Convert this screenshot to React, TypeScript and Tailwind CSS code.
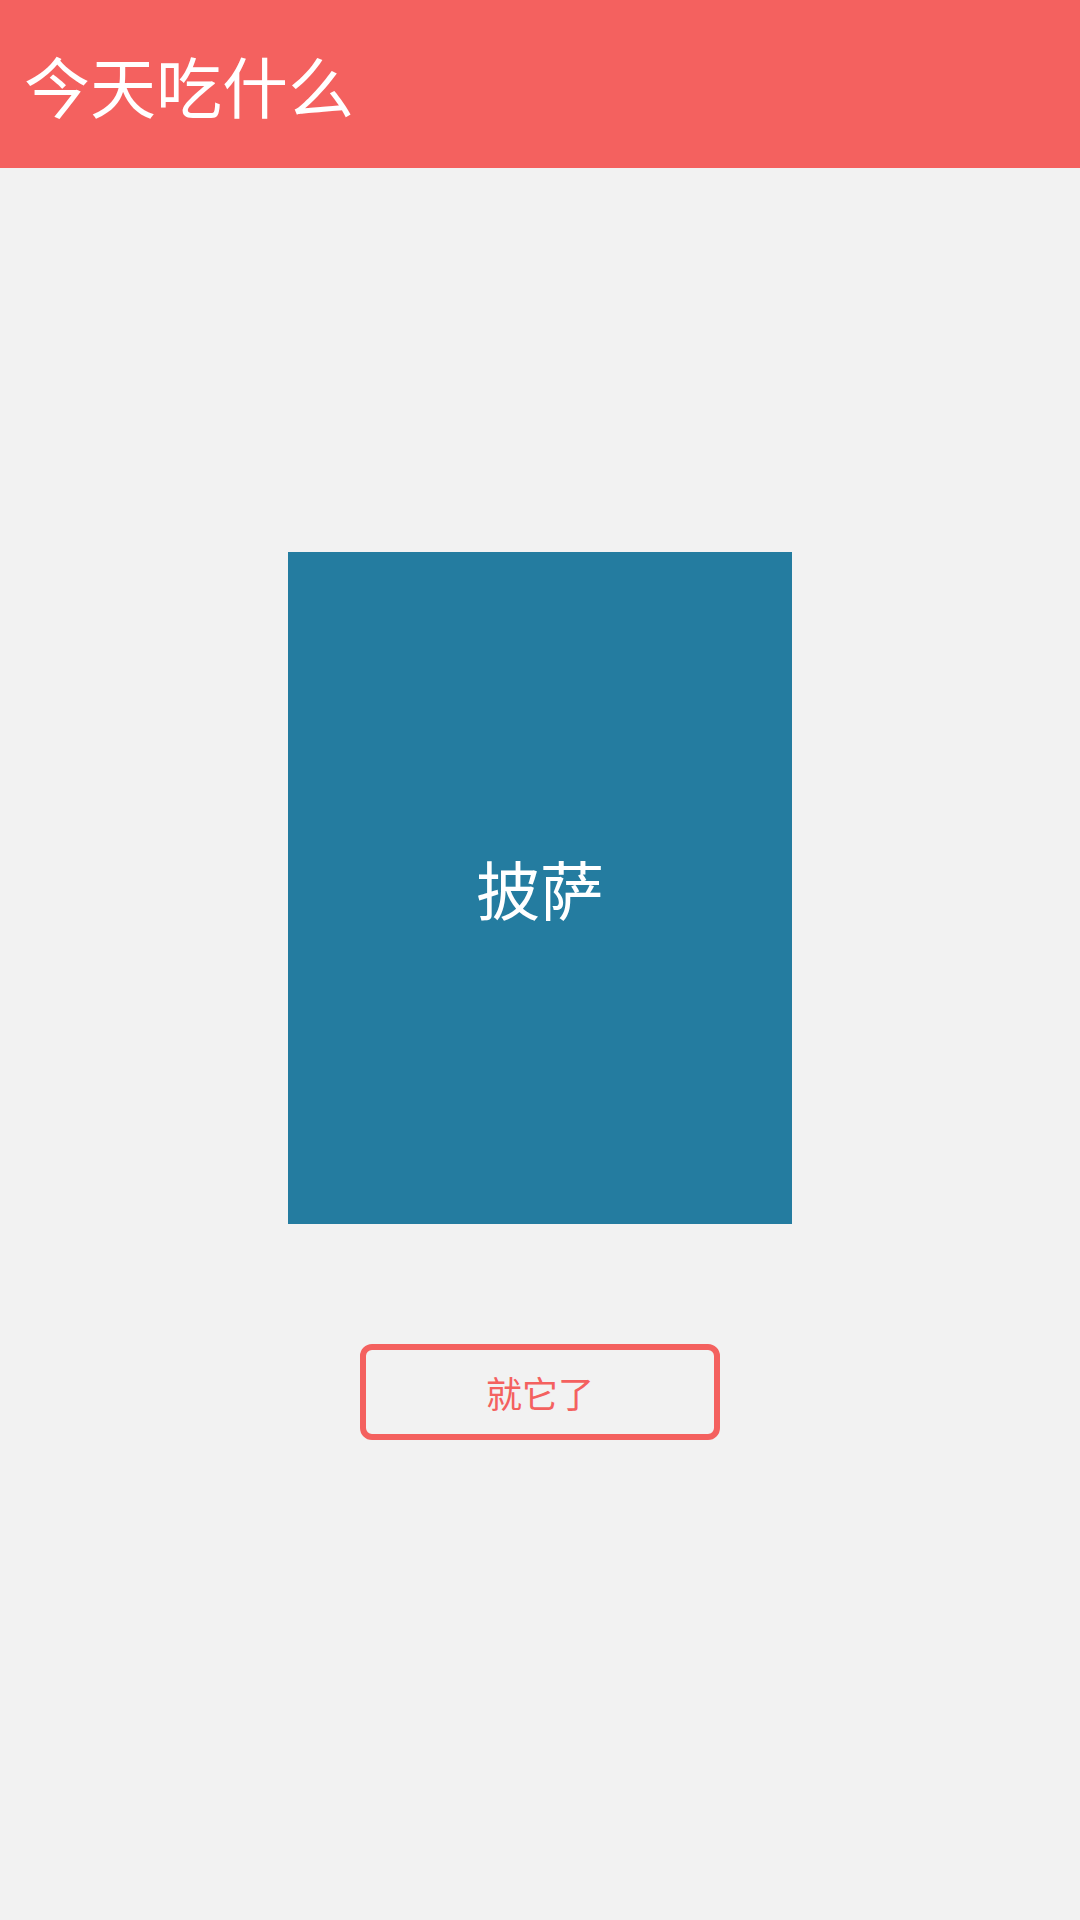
export default function App() {
  return (
    <div
      className="min-h-[1920px] w-[1080px] bg-[#f2f2f2] flex flex-col"
      style={{ fontFamily: '"Noto Sans CJK SC", "Noto Sans", sans-serif' }}
    >
      <header className="h-[168px] bg-[#f4615f] flex items-center pl-[24px]">
        <h1 className="text-[66px] leading-none text-white font-normal">今天吃什么</h1>
      </header>
      <main className="flex flex-col items-center pt-[384px]">
        <div className="w-[504px] h-[672px] bg-[#247ca0] flex items-center justify-center">
          <span className="text-[64px] leading-none text-white pb-[2px]">披萨</span>
        </div>
        <button className="mt-[120px] w-[360px] h-[96px] border-[6px] border-[#f4615f] rounded-[12px] flex items-center justify-center text-[36px] leading-none text-[#f4615f] bg-transparent">
          就它了
        </button>
      </main>
    </div>
  );
}
